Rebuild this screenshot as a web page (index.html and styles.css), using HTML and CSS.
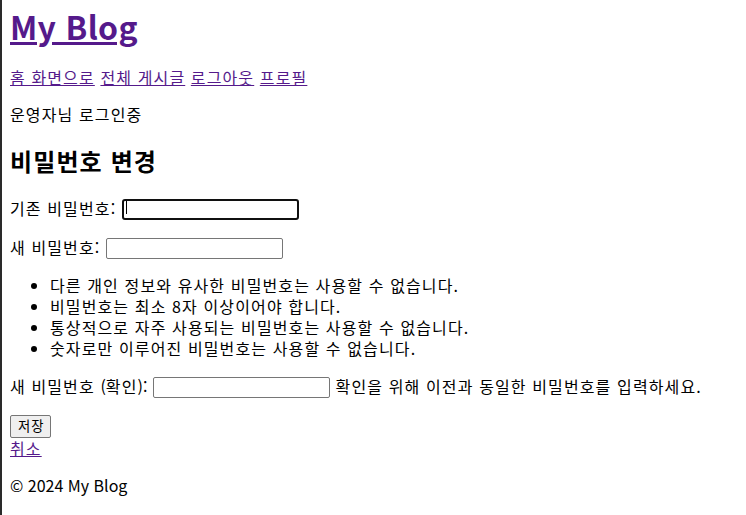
FILE: index.html
```html
<!DOCTYPE html>
<html lang="ko">
<head>
<meta charset="utf-8">
<title>비밀번호 변경 - My Blog</title>
<link rel="stylesheet" href="styles.css">
</head>
<body>
<header class="site-header">
  <h1 class="site-title"><a href="#">My Blog</a></h1>
  <nav class="site-nav">
    <a href="#">홈 화면으로</a>
    <a href="#">전체 게시글</a>
    <a href="#">로그아웃</a>
    <a href="#">프로필</a>
  </nav>
  <p class="user-status">운영자님 로그인중</p>
</header>
<main class="content">
  <h2 class="page-title">비밀번호 변경</h2>
  <form class="pw-form">
    <p class="field"><label for="old">기존 비밀번호:</label> <span class="input-wrap"><input id="old" class="text-input is-focused" type="password"><span class="caret"></span></span></p>
    <p class="field"><label for="new1">새 비밀번호:</label> <input id="new1" class="text-input" type="password"></p>
    <ul class="help-list">
      <li>다른 개인 정보와 유사한 비밀번호는 사용할 수 없습니다.</li>
      <li>비밀번호는 최소 8자 이상이어야 합니다.</li>
      <li>통상적으로 자주 사용되는 비밀번호는 사용할 수 없습니다.</li>
      <li>숫자로만 이루어진 비밀번호는 사용할 수 없습니다.</li>
    </ul>
    <p class="field field-last"><label for="new2">새 비밀번호 <span class="latin">(</span>확인<span class="latin">):</span></label> <input id="new2" class="text-input" type="password"> <span class="helptext">확인을 위해 이전과 동일한 비밀번호를 입력하세요.</span></p>
    <button type="submit" class="btn">저장</button>
  </form>
  <a href="#" class="cancel-link">취소</a>
</main>
<footer class="site-footer">
  <p class="copyright">© 2024 My Blog</p>
</footer>
</body>
</html>
```

FILE: styles.css
```css
html {
  border-left: 2px solid #2a2a2a;
  min-height: 100%;
  box-sizing: border-box;
  background: #fff;
}
body {
  margin: 8px;
  font-family: "Noto Sans CJK KR", "Noto Sans", sans-serif;
  font-size: 16px;
  line-height: 21px;
  color: #000;
  letter-spacing: 0.07em;
}
a {
  color: #551a8b;
}
.latin {
  letter-spacing: 0;
}
.site-title {
  margin: 0 0 22.5px;
  font-size: 32px;
  line-height: 36px;
  font-weight: bold;
  letter-spacing: 0.01em;
}
.site-nav {
  margin: 0;
}
.user-status {
  margin: 16px 0;
}
.page-title {
  margin: 20px 0;
  font-size: 24px;
  line-height: 32px;
  font-weight: bold;
}
.pw-form {
  margin: 0;
}
.field {
  margin: 16px 0;
  line-height: 23px;
}
.field-last {
  margin-bottom: 17px;
}
.input-wrap {
  position: relative;
  display: inline-block;
}
.text-input {
  box-sizing: border-box;
  width: 177px;
  height: 21px;
  padding: 1px 2px;
  border: 1px solid #767676;
  border-radius: 2px;
  font-family: inherit;
  font-size: 13.33px;
  background: #fff;
}
.text-input.is-focused {
  border: 2px solid #101010;
  border-radius: 3px;
  outline: none;
}
.caret {
  position: absolute;
  left: 4px;
  top: 4px;
  width: 1px;
  height: 13px;
  background: #000;
}
.help-list {
  margin: 16px 0;
  padding-left: 40px;
}
.btn {
  font-family: inherit;
  font-size: 13.33px;
  line-height: 18px;
  letter-spacing: 0.07em;
  padding: 1px 6px 1px 7px;
  border: 1px solid #767676;
  border-radius: 2px;
  background: #efefef;
  color: #000;
  height: 23px;
  display: block;
}
.cancel-link {
  display: inline-block;
}
.site-footer {
  margin: 0;
}
.copyright {
  margin: 16px 0;
  letter-spacing: 0;
}
```
